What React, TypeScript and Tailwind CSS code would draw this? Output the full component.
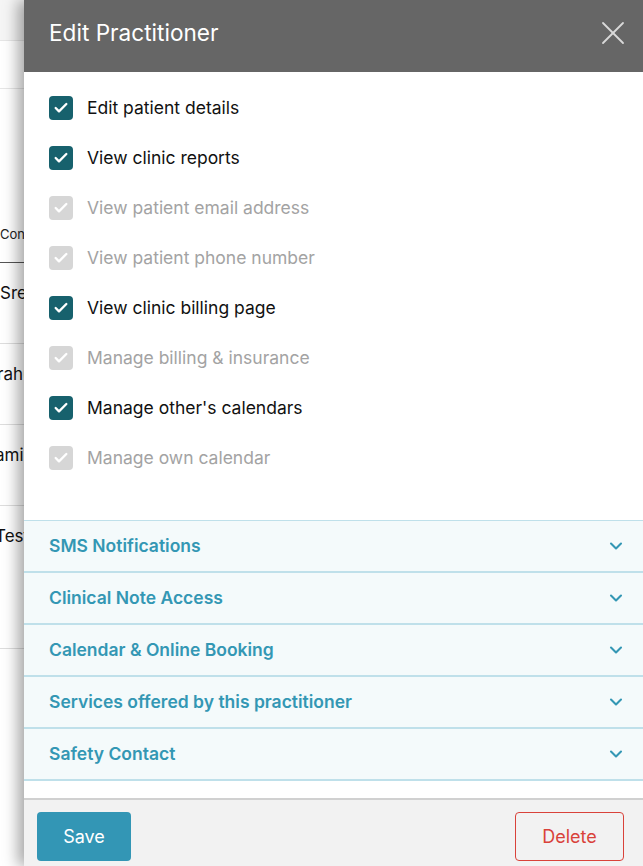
import { Check, ChevronDown, X } from 'lucide-react';

const permissions = [
  { label: 'Edit patient details', checked: true },
  { label: 'View clinic reports', checked: true },
  { label: 'View patient email address', checked: false },
  { label: 'View patient phone number', checked: false },
  { label: 'View clinic billing page', checked: true },
  { label: 'Manage billing & insurance', checked: false },
  { label: "Manage other's calendars", checked: true },
  { label: 'Manage own calendar', checked: false },
];

const sections = [
  'SMS Notifications',
  'Clinical Note Access',
  'Calendar & Online Booking',
  'Services offered by this practitioner',
  'Safety Contact',
];

const tableRows = ['Sreeja', 'rahul', 'amin', 'Test'];

export default function App() {
  return (
    <div className="relative h-[866px] w-[643px] overflow-hidden bg-white font-['Inter',sans-serif]">
      {/* Page behind the drawer */}
      <div className="flex flex-col">
        <div className="h-[41px] border-b border-[#e6e6e6] bg-[#f5f5f5]" />
        <div className="h-[48px] border-b border-[#e6e6e6]" />
        <div className="flex h-[174px] items-end border-b border-[#555] pb-[18px] text-[13px] text-[#222]">Contact</div>
        {tableRows.map((name, i) => (
          <div
            key={name}
            className={`border-b border-[#ddd] pt-[18px] text-[17px] text-[#111] ${i === 3 ? 'h-[143px]' : 'h-[81px]'}`}
          >
            <span className={i === 0 ? '' : i === 1 ? '-ml-[3px]' : '-ml-[5px]'}>{name}</span>
          </div>
        ))}
      </div>

      {/* Drawer */}
      <div className="absolute inset-y-0 left-[24px] right-0 flex flex-col bg-white shadow-[-6px_0_14px_rgba(0,0,0,0.35)]">
        <div className="flex h-[72px] shrink-0 items-center justify-between bg-[#666666] pb-[6px] pl-[25px] pr-[10px]">
          <h2 className="text-[22.6px] font-normal text-white">Edit Practitioner</h2>
          <X className="h-[40px] w-[40px] text-[#d9d9d9]" strokeWidth={1.1} />
        </div>

        <div className="flex flex-1 flex-col">
          <div className="flex flex-col px-[25px] pt-[11px] pb-[37px]">
            {permissions.map((p) => (
              <label key={p.label} className="flex h-[50px] items-center gap-[14px]">
                <span
                  className={`flex h-[24px] w-[24px] items-center justify-center rounded-[4px] ${
                    p.checked ? 'bg-[#17616d]' : 'bg-[#d6d6d6]'
                  }`}
                >
                  <Check className="h-[16px] w-[16px] text-white" strokeWidth={3.5} />
                </span>
                <span className={`text-[17.5px] ${p.checked ? 'text-[#111]' : 'text-[#a3a3a3]'}`}>{p.label}</span>
              </label>
            ))}
          </div>

          <div className="flex flex-col border-t border-[#bfe0ea]">
            {sections.map((s) => (
              <div
                key={s}
                className="flex h-[52px] items-center justify-between border-b-2 border-[#bfe0ea] bg-[#f4fafb] pl-[25px] pr-[17px]"
              >
                <span className="text-[17.5px] font-semibold text-[#3397b4]">{s}</span>
                <ChevronDown className="h-[20px] w-[20px] text-[#3397b4]" strokeWidth={2.5} />
              </div>
            ))}
          </div>
        </div>

        <div className="flex h-[68px] shrink-0 items-start justify-between border-t-2 border-[#d0d0d0] bg-[#f2f2f2] pl-[13px] pr-[19px] pt-[12px]">
          <button className="h-[49px] w-[94px] rounded-[4px] bg-[#3396b5] text-[18px] text-white">Save</button>
          <button className="h-[49px] w-[109px] rounded-[4px] border border-[#d9423a] text-[18px] text-[#d9423a]">
            Delete
          </button>
        </div>
      </div>
    </div>
  );
}
